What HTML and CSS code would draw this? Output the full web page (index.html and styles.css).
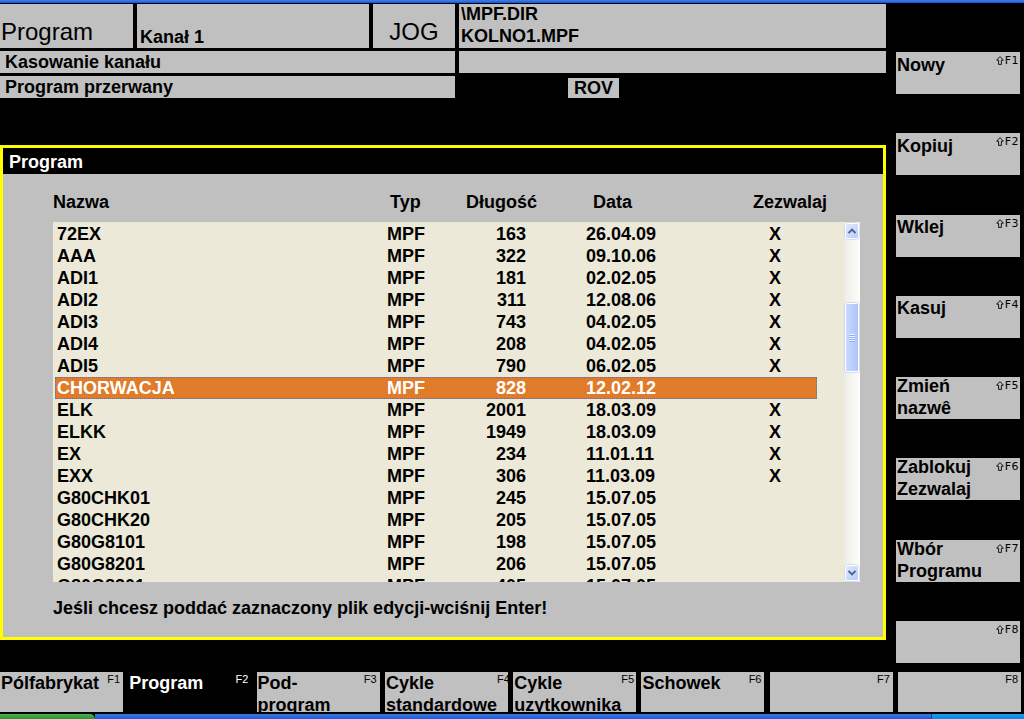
FILE: index.html
```html
<!DOCTYPE html>
<html lang="pl">
<head>
<meta charset="utf-8">
<title>Program</title>
<link rel="stylesheet" href="styles.css">
</head>
<body>
<div class="topbar"></div>
<div class="screen">
  <div class="main">
    <div class="hrow hrow1">
      <div class="cell c-prog">Program</div>
      <div class="cell c-kanal">Kanał 1</div>
      <div class="cell c-jog">JOG</div>
      <div class="cell c-path">\MPF.DIR<br>KOLNO1.MPF</div>
    </div>
    <div class="hrow hrow2">
      <div class="cell c-msg">Kasowanie kanału</div>
      <div class="cell"></div>
    </div>
    <div class="hrow hrow3">
      <div class="cell c-msg">Program przerwany</div>
      <div class="rov-area"><div class="rov">ROV</div></div>
    </div>

    <section class="panel">
      <div class="panel-title">Program</div>
      <div class="panel-body">
        <div class="thead">
          <div>Nazwa</div><div>Typ</div><div>Długość</div><div>Data</div><div>Zezwalaj</div>
        </div>
        <div class="list">
          <div class="rows">
            <div class="row"><span>72EX</span><span>MPF</span><span class="len">163</span><span></span><span>26.04.09</span><span class="x">X</span></div>
            <div class="row"><span>AAA</span><span>MPF</span><span class="len">322</span><span></span><span>09.10.06</span><span class="x">X</span></div>
            <div class="row"><span>ADI1</span><span>MPF</span><span class="len">181</span><span></span><span>02.02.05</span><span class="x">X</span></div>
            <div class="row"><span>ADI2</span><span>MPF</span><span class="len">311</span><span></span><span>12.08.06</span><span class="x">X</span></div>
            <div class="row"><span>ADI3</span><span>MPF</span><span class="len">743</span><span></span><span>04.02.05</span><span class="x">X</span></div>
            <div class="row"><span>ADI4</span><span>MPF</span><span class="len">208</span><span></span><span>04.02.05</span><span class="x">X</span></div>
            <div class="row"><span>ADI5</span><span>MPF</span><span class="len">790</span><span></span><span>06.02.05</span><span class="x">X</span></div>
            <div class="row sel"><span>CHORWACJA</span><span>MPF</span><span class="len">828</span><span></span><span>12.02.12</span><span class="x"></span></div>
            <div class="row"><span>ELK</span><span>MPF</span><span class="len">2001</span><span></span><span>18.03.09</span><span class="x">X</span></div>
            <div class="row"><span>ELKK</span><span>MPF</span><span class="len">1949</span><span></span><span>18.03.09</span><span class="x">X</span></div>
            <div class="row"><span>EX</span><span>MPF</span><span class="len">234</span><span></span><span>11.01.11</span><span class="x">X</span></div>
            <div class="row"><span>EXX</span><span>MPF</span><span class="len">306</span><span></span><span>11.03.09</span><span class="x">X</span></div>
            <div class="row"><span>G80CHK01</span><span>MPF</span><span class="len">245</span><span></span><span>15.07.05</span><span class="x"></span></div>
            <div class="row"><span>G80CHK20</span><span>MPF</span><span class="len">205</span><span></span><span>15.07.05</span><span class="x"></span></div>
            <div class="row"><span>G80G8101</span><span>MPF</span><span class="len">198</span><span></span><span>15.07.05</span><span class="x"></span></div>
            <div class="row"><span>G80G8201</span><span>MPF</span><span class="len">206</span><span></span><span>15.07.05</span><span class="x"></span></div>
            <div class="row"><span>G80G8301</span><span>MPF</span><span class="len">405</span><span></span><span>15.07.05</span><span class="x"></span></div>
          </div>
          <div class="scrollbar">
            <div class="sb-btn">
              <svg width="8" height="6" viewBox="0 0 8 6"><path d="M0.5 5 L4 1.5 L7.5 5" fill="none" stroke="#4d6185" stroke-width="1.8"/></svg>
            </div>
            <div class="sb-gap"></div>
            <div class="sb-thumb">
              <div class="grip"></div><div class="grip"></div><div class="grip"></div><div class="grip"></div>
            </div>
            <div class="sb-fill"></div>
            <div class="sb-btn">
              <svg width="8" height="6" viewBox="0 0 8 6"><path d="M0.5 1 L4 4.5 L7.5 1" fill="none" stroke="#4d6185" stroke-width="1.8"/></svg>
            </div>
          </div>
        </div>
        <div class="hint">Jeśli chcesz poddać zaznaczony plik edycji-wciśnij Enter!</div>
      </div>
    </section>
  </div>

  <aside class="softkeys">
    <div class="vkey one"><div class="vlabel">Nowy</div><div class="vf"><svg class="sh" width="8" height="9" viewBox="0 0 8 9"><path d="M4 0.6 L7.4 4.2 L5.4 4.2 L5.4 8.4 L2.6 8.4 L2.6 4.2 L0.6 4.2 Z" fill="none" stroke="#000" stroke-width="0.9"/></svg>F1</div></div>
    <div class="vkey one"><div class="vlabel">Kopiuj</div><div class="vf"><svg class="sh" width="8" height="9" viewBox="0 0 8 9"><path d="M4 0.6 L7.4 4.2 L5.4 4.2 L5.4 8.4 L2.6 8.4 L2.6 4.2 L0.6 4.2 Z" fill="none" stroke="#000" stroke-width="0.9"/></svg>F2</div></div>
    <div class="vkey one"><div class="vlabel">Wklej</div><div class="vf"><svg class="sh" width="8" height="9" viewBox="0 0 8 9"><path d="M4 0.6 L7.4 4.2 L5.4 4.2 L5.4 8.4 L2.6 8.4 L2.6 4.2 L0.6 4.2 Z" fill="none" stroke="#000" stroke-width="0.9"/></svg>F3</div></div>
    <div class="vkey one"><div class="vlabel">Kasuj</div><div class="vf"><svg class="sh" width="8" height="9" viewBox="0 0 8 9"><path d="M4 0.6 L7.4 4.2 L5.4 4.2 L5.4 8.4 L2.6 8.4 L2.6 4.2 L0.6 4.2 Z" fill="none" stroke="#000" stroke-width="0.9"/></svg>F4</div></div>
    <div class="vkey two"><div class="vlabel">Zmień<br>nazwê</div><div class="vf"><svg class="sh" width="8" height="9" viewBox="0 0 8 9"><path d="M4 0.6 L7.4 4.2 L5.4 4.2 L5.4 8.4 L2.6 8.4 L2.6 4.2 L0.6 4.2 Z" fill="none" stroke="#000" stroke-width="0.9"/></svg>F5</div></div>
    <div class="vkey two"><div class="vlabel">Zablokuj<br>Zezwalaj</div><div class="vf"><svg class="sh" width="8" height="9" viewBox="0 0 8 9"><path d="M4 0.6 L7.4 4.2 L5.4 4.2 L5.4 8.4 L2.6 8.4 L2.6 4.2 L0.6 4.2 Z" fill="none" stroke="#000" stroke-width="0.9"/></svg>F6</div></div>
    <div class="vkey two"><div class="vlabel">Wbór<br>Programu</div><div class="vf"><svg class="sh" width="8" height="9" viewBox="0 0 8 9"><path d="M4 0.6 L7.4 4.2 L5.4 4.2 L5.4 8.4 L2.6 8.4 L2.6 4.2 L0.6 4.2 Z" fill="none" stroke="#000" stroke-width="0.9"/></svg>F7</div></div>
    <div class="vkey one"><div class="vlabel"></div><div class="vf"><svg class="sh" width="8" height="9" viewBox="0 0 8 9"><path d="M4 0.6 L7.4 4.2 L5.4 4.2 L5.4 8.4 L2.6 8.4 L2.6 4.2 L0.6 4.2 Z" fill="none" stroke="#000" stroke-width="0.9"/></svg>F8</div></div>
  </aside>
</div>

<div class="hkeys">
  <div class="hkey"><div class="hlabel">Pólfabrykat</div><div class="hf">F1</div></div>
  <div class="hkey active"><div class="hlabel">Program</div><div class="hf">F2</div></div>
  <div class="hkey"><div class="hlabel">Pod-<br>program</div><div class="hf">F3</div></div>
  <div class="hkey"><div class="hlabel">Cykle<br>standardowe</div><div class="hf">F4</div></div>
  <div class="hkey"><div class="hlabel">Cykle<br>uzytkownika</div><div class="hf">F5</div></div>
  <div class="hkey"><div class="hlabel">Schowek</div><div class="hf">F6</div></div>
  <div class="hkey"><div class="hlabel"></div><div class="hf">F7</div></div>
  <div class="hkey"><div class="hlabel"></div><div class="hf">F8</div></div>
</div>
<div class="taskbar"><div class="start"></div><div class="tb-mid"></div><div class="tray"></div></div>
</body>
</html>
```

FILE: styles.css
```css
* { box-sizing: border-box; margin: 0; padding: 0; }

html, body {
  width: 1024px;
  height: 719px;
  overflow: hidden;
  background: #000;
}

body {
  font-family: "Liberation Sans", Arial, sans-serif;
  font-size: 18px;
  font-weight: bold;
  color: #000;
}

.topbar {
  height: 3px;
  background: linear-gradient(#3d7ff0, #1a55d2);
}

.screen {
  display: grid;
  grid-template-columns: 886px 138px;
  height: 669px;
}

.main {
  display: flex;
  flex-direction: column;
  gap: 3px;
  padding-top: 1px;
}

/* header rows */
.hrow {
  display: grid;
  column-gap: 4px;
}
.hrow1 {
  height: 44px;
  grid-template-columns: 133px 232px 82px 427px;
}
.hrow2, .hrow3 {
  height: 22px;
  grid-template-columns: 455px 427px;
}
.cell {
  background: #c0c0c0;
  white-space: nowrap;
  overflow: hidden;
}
.c-prog, .c-jog {
  font-size: 24px;
  font-weight: normal;
  line-height: 28px;
  padding-top: 14px;
}
.c-prog { padding-left: 1px; }
.c-jog { text-align: center; }
.c-kanal {
  line-height: 22px;
  padding-top: 22px;
  padding-left: 3px;
}
.c-path {
  line-height: 21.5px;
  padding-left: 2px;
}
.c-msg {
  line-height: 22px;
  padding-left: 5px;
}
.rov-area {
  padding-left: 109px;
  padding-top: 2px;
}
.rov {
  width: 51px;
  height: 20px;
  line-height: 20px;
  background: #c0c0c0;
  text-align: center;
}

/* panel */
.panel {
  margin-top: 44px;
  width: 886px;
  height: 495px;
  border: 3px solid #ffff00;
  display: flex;
  flex-direction: column;
}
.panel-title {
  height: 26px;
  background: #000;
  color: #fff;
  line-height: 24px;
  padding-top: 2px;
  padding-left: 6px;
}
.panel-body {
  flex: 1;
  background: #c0c0c0;
  display: flex;
  flex-direction: column;
}
.thead {
  display: grid;
  grid-template-columns: 337px 76px 127px 160px auto;
  padding: 17px 0 9px 50px;
  line-height: 22px;
}
.list {
  margin-left: 50px;
  width: 807px;
  height: 360px;
  background: #ece9d8;
  display: flex;
}
.rows {
  flex: 1;
  overflow: hidden;
  padding: 1px 0 0 2px;
}
.row {
  display: grid;
  grid-template-columns: 330px 80px 59px 60px 150px 78px;
  width: 762px;
  height: 22px;
  line-height: 22px;
  padding-left: 2px;
  white-space: nowrap;
}
.row .len { text-align: right; }
.row .x { text-align: center; }
.row.sel {
  background: #e07b2a;
  color: #fff;
  outline: 1px dotted #4a72c8;
  outline-offset: -1px;
}

/* XP style scrollbar */
.scrollbar {
  width: 16px;
  display: flex;
  flex-direction: column;
  padding: 1px;
  background: linear-gradient(to right, #eeede5, #fdfdfb);
}
.sb-btn {
  height: 16px;
  border: 1px solid #fff;
  border-radius: 2px;
  background: linear-gradient(to bottom right, #e0e9fe, #b9cdfa);
  box-shadow: 0 0 0 0.5px #b4c8f6;
  display: flex;
  align-items: center;
  justify-content: center;
}
.sb-gap { height: 64px; }
.sb-fill { flex: 1; }
.sb-thumb {
  height: 69px;
  border: 1px solid #fff;
  border-radius: 2px;
  background: linear-gradient(to right, #c9d8fc, #b9cdfb 60%, #adc3f7);
  box-shadow: 0 0 0 0.5px #a9bff2;
  display: flex;
  flex-direction: column;
  align-items: center;
  justify-content: center;
  gap: 1px;
}
.grip {
  width: 6px;
  height: 1px;
  background: #eef4ff;
  box-shadow: 0 1px 0 #8fb0ef;
}

.hint {
  padding: 15px 0 0 50px;
  line-height: 22px;
  white-space: nowrap;
}

/* vertical softkeys */
.softkeys {
  display: flex;
  flex-direction: column;
  gap: 39.3px;
  padding-top: 49px;
  padding-left: 10px;
}
.vkey {
  width: 124px;
  height: 42px;
  background: #c0c0c0;
  display: flex;
  justify-content: space-between;
  overflow: hidden;
}
.vlabel {
  line-height: 22px;
  padding-left: 1px;
  white-space: nowrap;
}
.vkey.one .vlabel { padding-top: 1.5px; }
.vkey.two .vlabel { margin-top: -2px; }
.vf {
  display: flex;
  align-items: flex-start;
  font-size: 11px;
  font-weight: normal;
  letter-spacing: 0.5px;
  line-height: 12px;
  padding-top: 3px;
  padding-right: 1px;
  white-space: nowrap;
  font-family: "DejaVu Sans", "Liberation Sans", sans-serif;
}
.vf .sh {
  margin-top: 1px;
  margin-right: 1px;
  flex: none;
}

/* horizontal softkeys */
.hkeys {
  height: 40px;
  display: grid;
  grid-template-columns: repeat(8, 123px);
  column-gap: 5.3px;
}
.hkey {
  background: #c0c0c0;
  display: flex;
  justify-content: space-between;
  overflow: hidden;
}
.hkey.active {
  background: #000;
  color: #fff;
}
.hlabel {
  line-height: 22px;
  padding-left: 1px;
  white-space: nowrap;
}
.hf {
  font-size: 11px;
  font-weight: normal;
  line-height: 12px;
  padding-top: 1px;
  padding-right: 3px;
}

.taskbar {
  margin-top: 2px;
  height: 5px;
  display: flex;
}
.start {
  width: 95px;
  background: linear-gradient(#4fb04f, #2f8e2f);
  border-top-right-radius: 6px;
}
.tb-mid {
  flex: 1;
  background: linear-gradient(#3b7ae8, #2458d6);
}
.tray {
  width: 93px;
  background: linear-gradient(#1b9bf0, #0f84e0);
  border-left: 1px solid #0a3fa8;
}
```
